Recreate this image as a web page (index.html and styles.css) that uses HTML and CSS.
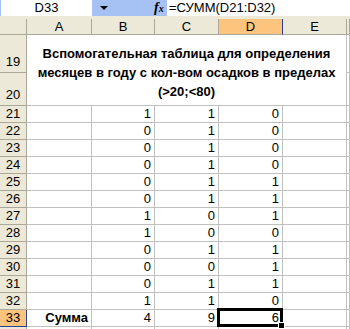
FILE: index.html
```html
<html>
<head>
	<title>Вспомогательная таблица</title>
	<link rel="stylesheet" href="styles.css">
</head>
<body>
	<div class="formula-bar">
		<div class="name-box">D33</div>
		<div class="name-drop"><span class="arrow"></span></div>
		<div class="fx"><i>f</i><i class="fx-x">x</i></div>
		<div class="formula">=СУММ(D21:D32)</div>
	</div>
	<div class="bar-gap"></div>

	<div class="sheet">
		<div class="hdr corner"></div>
		<div class="hdr">A</div>
		<div class="hdr">B</div>
		<div class="hdr">C</div>
		<div class="hdr active-col">D</div>
		<div class="hdr">E</div>
		<div class="hdr"></div>

		<div class="hdr rowhdr tall">19</div>
		<div class="title">Вспомогательная таблица для определения месяцев в году с кол-вом осадков в пределах (&gt;20;&lt;80)</div>
		<div class="cell"></div>
		<div class="hdr rowhdr tall">20</div>
		<div class="cell"></div>

		<div class="hdr rowhdr">21</div><div class="cell"></div><div class="cell num">1</div><div class="cell num">1</div><div class="cell num">0</div><div class="cell"></div><div class="cell"></div>
		<div class="hdr rowhdr">22</div><div class="cell"></div><div class="cell num">0</div><div class="cell num">1</div><div class="cell num">0</div><div class="cell"></div><div class="cell"></div>
		<div class="hdr rowhdr">23</div><div class="cell"></div><div class="cell num">0</div><div class="cell num">1</div><div class="cell num">0</div><div class="cell"></div><div class="cell"></div>
		<div class="hdr rowhdr">24</div><div class="cell"></div><div class="cell num">0</div><div class="cell num">1</div><div class="cell num">0</div><div class="cell"></div><div class="cell"></div>
		<div class="hdr rowhdr">25</div><div class="cell"></div><div class="cell num">0</div><div class="cell num">1</div><div class="cell num">1</div><div class="cell"></div><div class="cell"></div>
		<div class="hdr rowhdr">26</div><div class="cell"></div><div class="cell num">0</div><div class="cell num">1</div><div class="cell num">1</div><div class="cell"></div><div class="cell"></div>
		<div class="hdr rowhdr">27</div><div class="cell"></div><div class="cell num">1</div><div class="cell num">0</div><div class="cell num">1</div><div class="cell"></div><div class="cell"></div>
		<div class="hdr rowhdr">28</div><div class="cell"></div><div class="cell num">1</div><div class="cell num">0</div><div class="cell num">0</div><div class="cell"></div><div class="cell"></div>
		<div class="hdr rowhdr">29</div><div class="cell"></div><div class="cell num">0</div><div class="cell num">1</div><div class="cell num">1</div><div class="cell"></div><div class="cell"></div>
		<div class="hdr rowhdr">30</div><div class="cell"></div><div class="cell num">0</div><div class="cell num">0</div><div class="cell num">1</div><div class="cell"></div><div class="cell"></div>
		<div class="hdr rowhdr">31</div><div class="cell"></div><div class="cell num">0</div><div class="cell num">1</div><div class="cell num">1</div><div class="cell"></div><div class="cell"></div>
		<div class="hdr rowhdr">32</div><div class="cell"></div><div class="cell num">1</div><div class="cell num">1</div><div class="cell num">0</div><div class="cell"></div><div class="cell"></div>
		<div class="hdr rowhdr active-row">33</div><div class="cell num label">Сумма</div><div class="cell num">4</div><div class="cell num">9</div><div class="cell num selected">6</div><div class="cell"></div><div class="cell"></div>
		<div class="hdr rowhdr">34</div><div class="cell"></div><div class="cell"></div><div class="cell"></div><div class="cell"></div><div class="cell"></div><div class="cell"></div>
	</div>
</body>
</html>
```

FILE: styles.css
```css
body {
	margin: 0;
	background-color: #ffffff;
	color: #000000;
	font-family: "Liberation Sans", Arial, sans-serif;
	font-size: 13px;
	overflow: hidden;
}
.formula-bar {
	display: flex;
	height: 16px;
	background-color: #a6c2f5;
}
.name-box {
	width: 91px;
	margin-left: 1px;
	background-color: #ffffff;
	text-align: center;
	line-height: 16px;
}
.name-drop {
	width: 62px;
	display: flex;
	align-items: center;
}
.arrow {
	margin-left: 8px;
	width: 0;
	height: 0;
	border-left: 4px solid transparent;
	border-right: 4px solid transparent;
	border-top: 4px solid #000000;
}
.fx {
	width: 13px;
	font-family: "Liberation Serif", serif;
	font-weight: bold;
	font-size: 14px;
	line-height: 16px;
}
.fx-x {
	font-size: 10px;
}
.formula {
	flex: 1;
	background-color: #ffffff;
	padding-left: 2px;
	line-height: 16px;
}
.bar-gap {
	height: 3px;
	background-color: #ece9d8;
}
.sheet {
	display: grid;
	grid-template-columns: 27px 65px 63px 64px 64px 64px 1fr;
	grid-template-rows: 16px 38px 33px repeat(14, 17px);
}
.sheet > div {
	box-sizing: border-box;
	border-right: 1px solid #c0c0c0;
	border-bottom: 1px solid #c0c0c0;
	white-space: nowrap;
}
.sheet > .hdr {
	background-color: #ece9d8;
	border-color: #aca899;
	text-align: center;
	line-height: 15px;
}
.sheet > .rowhdr {
	line-height: 16px;
}
.sheet > .tall {
	display: flex;
	align-items: flex-end;
	justify-content: center;
	padding-bottom: 2px;
}
.sheet > .active-col {
	background-color: #fcc47c;
	border-right-color: #2a4090;
}
.sheet > .active-row {
	background-color: #fcc47c;
	border-right-color: #2a4090;
	border-bottom-color: #2a4090;
}
.title {
	grid-column: 2 / 7;
	grid-row: 2 / 4;
	text-align: center;
	font-weight: bold;
	line-height: 19px;
	padding: 9px 0 0 0;
	white-space: normal !important;
}
.num {
	text-align: right;
	padding-right: 3px;
	line-height: 16px;
}
.label {
	font-weight: bold;
}
.selected {
	position: relative;
}
.selected::before {
	content: "";
	position: absolute;
	left: -2px;
	top: -2px;
	right: -1px;
	bottom: -1px;
	border: 3px solid #000000;
}
.selected::after {
	content: "";
	position: absolute;
	right: -3px;
	bottom: -3px;
	width: 5px;
	height: 5px;
	background-color: #000000;
	border: 1px solid #ffffff;
}
```
